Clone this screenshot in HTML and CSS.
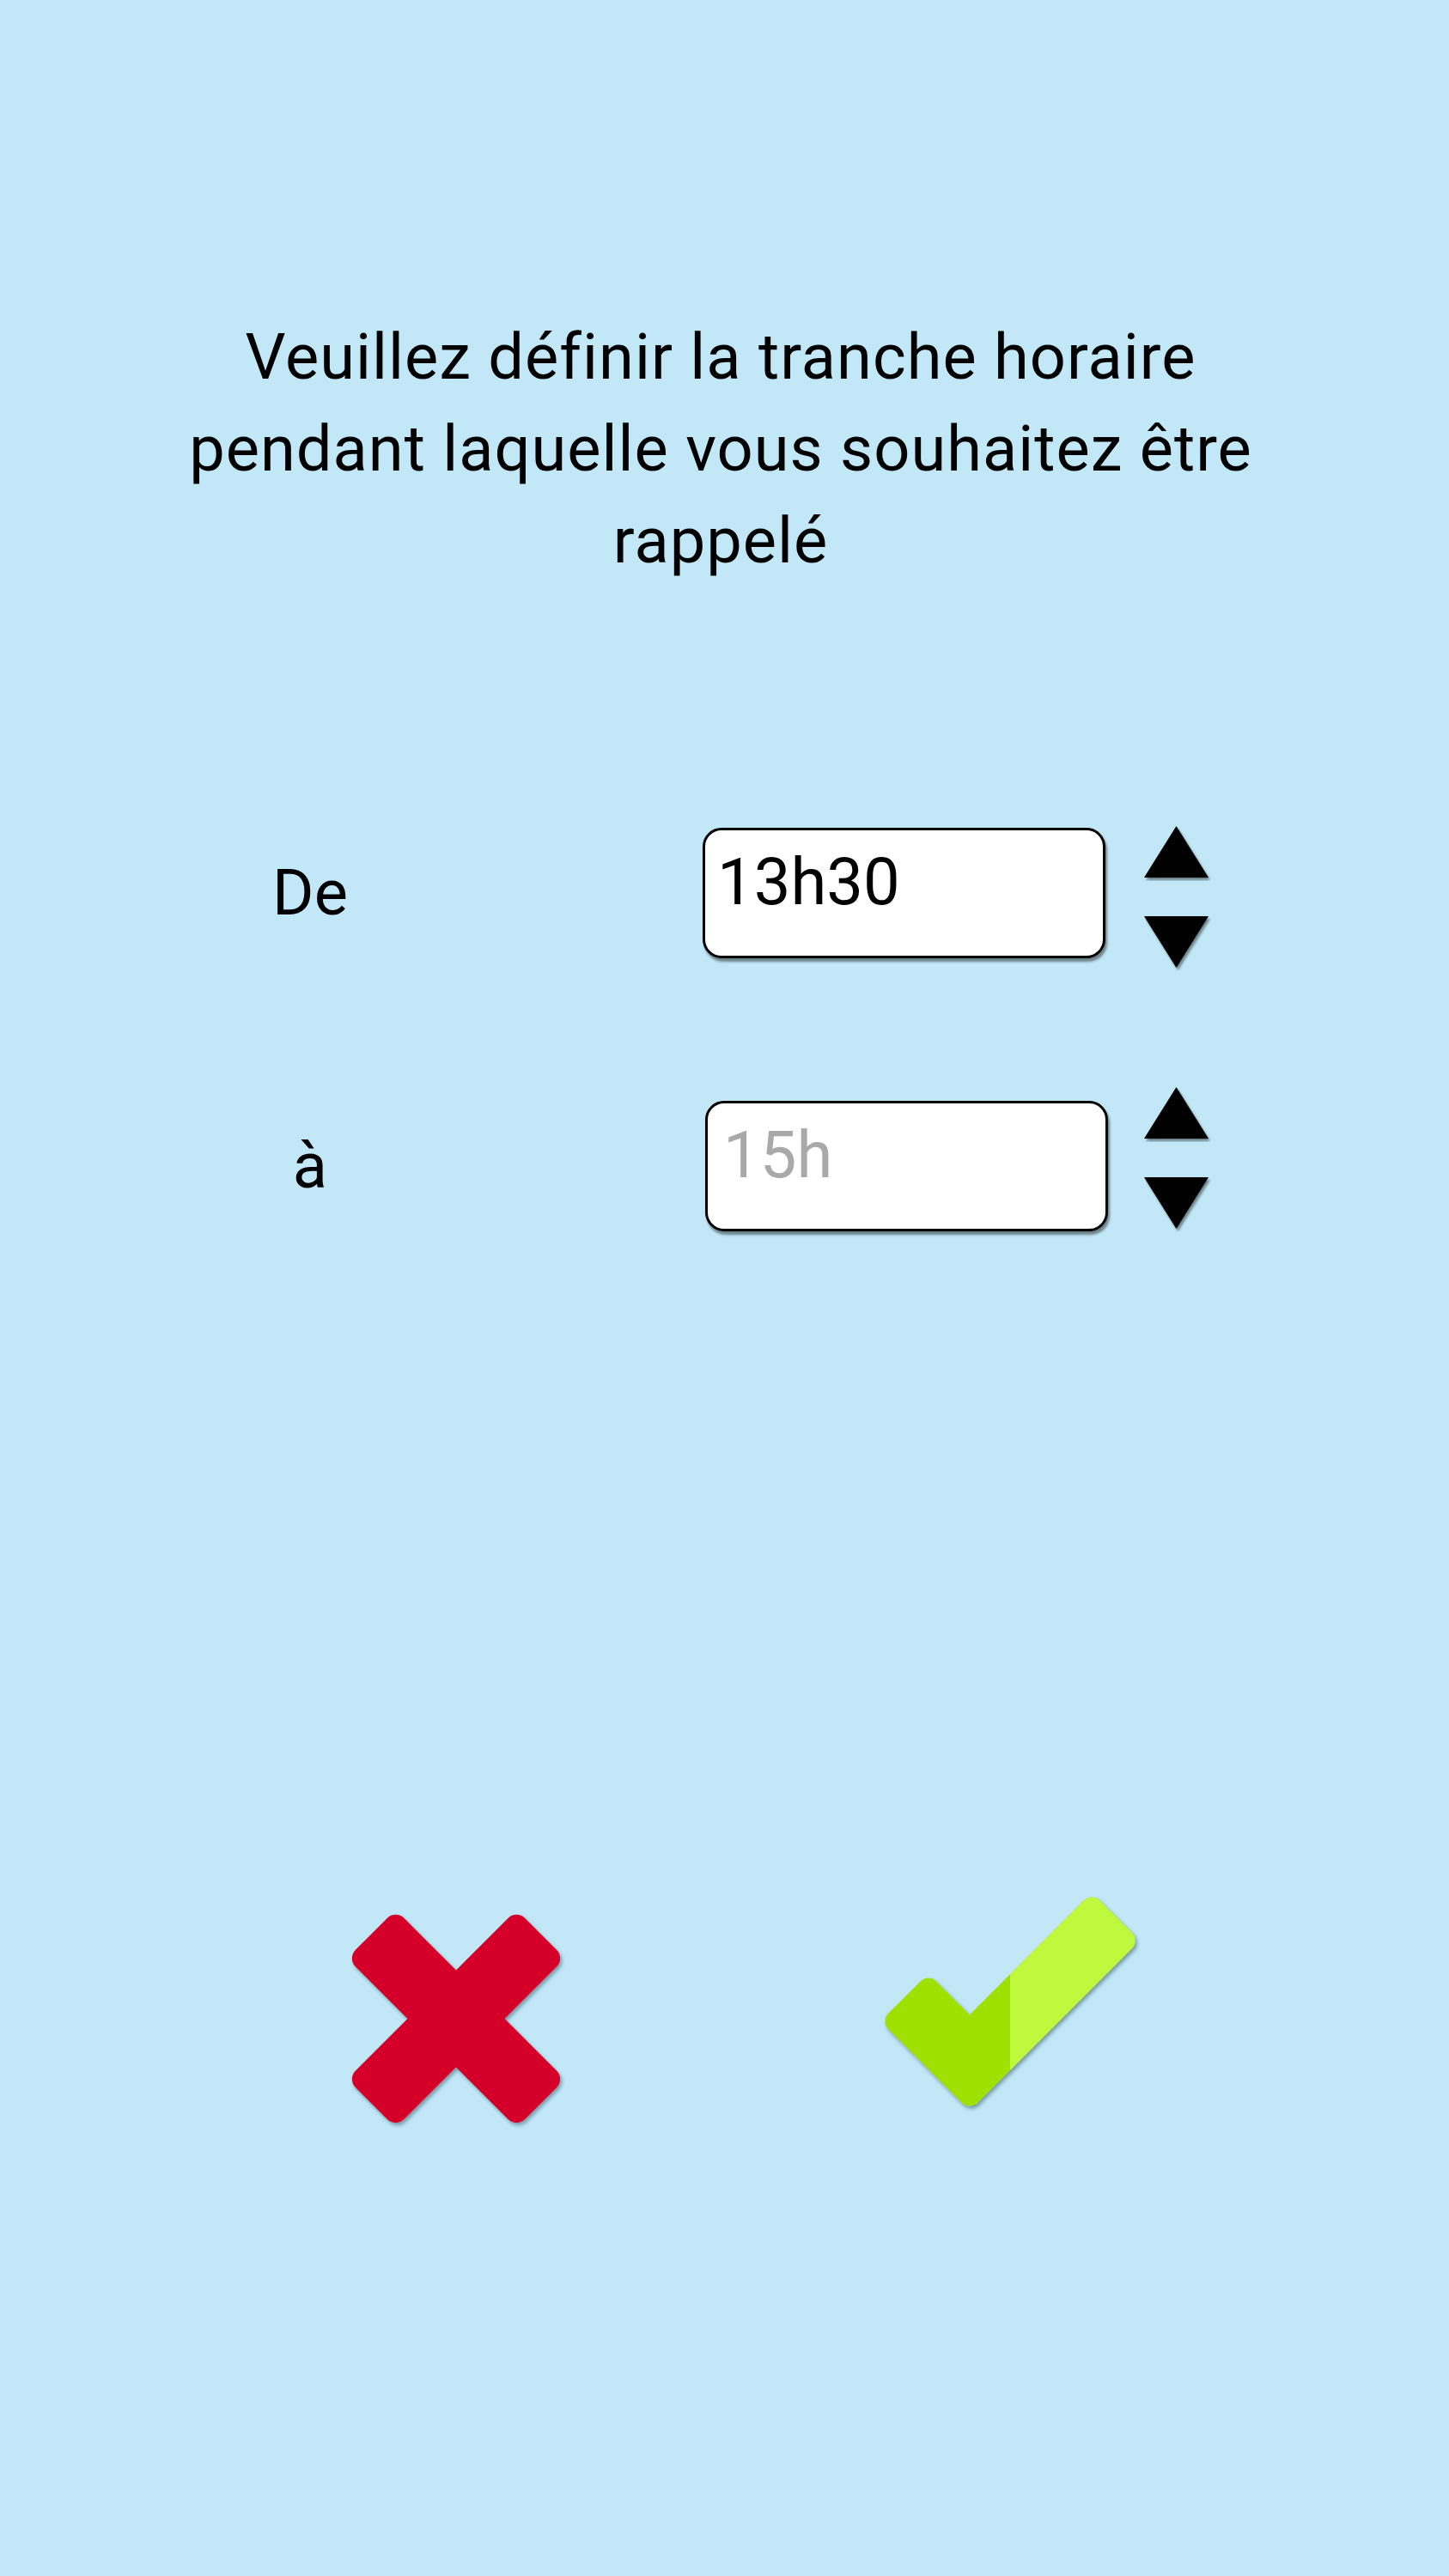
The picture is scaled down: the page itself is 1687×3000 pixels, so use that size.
FILE: index.html
```html
<!DOCTYPE html>
<html lang="fr">
<head>
<meta charset="utf-8">
<title>Tranche horaire</title>
<link rel="stylesheet" href="styles.css">
</head>
<body>
<main class="screen">
  <h1 class="title">Veuillez définir la tranche horaire pendant laquelle vous souhaitez être rappelé</h1>

  <div class="rows">
    <div class="row row-from">
      <div class="label">De</div>
      <div class="field"><span class="value">13h30</span></div>
      <div class="spinner">
        <svg class="arrow" width="80" height="64" viewBox="0 0 80 64"><polygon points="37.5,0 75,60 0,60" class="tri" filter="url(#sh)"/></svg>
        <svg class="arrow" width="80" height="64" viewBox="0 0 80 64"><polygon points="0,0 75,0 37.5,60" class="tri" filter="url(#sh)"/></svg>
      </div>
    </div>
    <div class="row row-to">
      <div class="label">à</div>
      <div class="field"><span class="value placeholder">15h</span></div>
      <div class="spinner">
        <svg class="arrow" width="80" height="64" viewBox="0 0 80 64"><polygon points="37.5,0 75,60 0,60" class="tri" filter="url(#sh)"/></svg>
        <svg class="arrow" width="80" height="64" viewBox="0 0 80 64"><polygon points="0,0 75,0 37.5,60" class="tri" filter="url(#sh)"/></svg>
      </div>
    </div>
  </div>

  <div class="actions">
    <svg class="cancel" width="260" height="290" viewBox="0 0 260 290">
      <g filter="url(#sh2)" fill="#d50029">
        <rect x="-9.5" y="115" width="279" height="80" rx="14" transform="rotate(45 130 155)"/>
        <rect x="-9.5" y="115" width="279" height="80" rx="14" transform="rotate(-45 130 155)"/>
      </g>
    </svg>
    <svg class="ok" width="330" height="290" viewBox="0 0 330 290">
      <defs>
        <clipPath id="rightPart"><rect x="160" y="0" width="200" height="290"/></clipPath>
      </defs>
      <g filter="url(#sh2)">
        <g fill="#a0e000">
          <rect x="113" y="183" width="280" height="79" rx="13" transform="rotate(-45 113 262)"/>
          <rect x="-34" y="183" width="147" height="79" rx="13" transform="rotate(45 113 262)"/>
        </g>
        <g clip-path="url(#rightPart)">
          <rect x="113" y="183" width="280" height="79" rx="13" fill="#bff83c" transform="rotate(-45 113 262)"/>
        </g>
      </g>
    </svg>
  </div>

  <svg class="defs" width="0" height="0">
    <defs>
      <filter id="sh" x="-20%" y="-20%" width="140%" height="140%">
        <feDropShadow dx="2" dy="3" stdDeviation="1.5" flood-color="#000" flood-opacity="0.45"/>
      </filter>
      <filter id="sh2" x="-10%" y="-10%" width="120%" height="120%">
        <feDropShadow dx="2" dy="3" stdDeviation="2" flood-color="#1b3a4a" flood-opacity="0.45"/>
      </filter>
    </defs>
  </svg>
</main>
</body>
</html>
```

FILE: styles.css
```css
html, body {
  margin: 0;
  padding: 0;
}

body {
  background: #c2e8f7;
  font-family: Roboto, "Noto Sans", sans-serif;
  color: #000;
}

.screen {
  width: 1687px;
  min-height: 3000px;
  padding-top: 362px;
  box-sizing: border-box;
}

.title {
  width: 1300px;
  margin: 0 0 0 189px;
  font-size: 74px;
  letter-spacing: 1px;
  font-weight: 400;
  line-height: 107px;
  text-align: center;
}

.rows {
  margin-top: 273px;
  display: flex;
  flex-direction: column;
  gap: 151px;
}

.row {
  display: flex;
  align-items: center;
  padding-left: 260px;
  height: 167px;
}

.label {
  width: 202px;
  text-align: center;
  font-size: 74px;
  line-height: 1;
}

.field {
  margin-left: 356px;
  width: 469px;
  height: 152px;
  box-sizing: border-box;
  border: 3px solid #000;
  border-radius: 22px;
  background: #fff;
  box-shadow: 2px 4px 3px rgba(0, 0, 0, 0.45);
  padding: 22px 0 0 14px;
}

.row-to .field {
  margin-left: 359px;
}

.value {
  display: block;
  font-size: 76px;
  line-height: 76px;
  color: #000;
}

.value.placeholder {
  color: #a9a9a9;
  padding-left: 4px;
}

.spinner {
  margin-left: 45px;
  display: flex;
  flex-direction: column;
  gap: 41px;
}

.row-from .spinner {
  margin-top: 14px;
}

.row-to .spinner {
  margin-left: 42px;
  margin-bottom: 14px;
}

.arrow {
  display: block;
}

.tri {
  fill: #000;
}

.actions {
  margin-top: 755px;
  display: flex;
  align-items: flex-start;
  padding-left: 401px;
}

.ok {
  margin-left: 355px;
}

.cancel, .ok {
  display: block;
  overflow: visible;
}

.defs {
  position: absolute;
}
```
